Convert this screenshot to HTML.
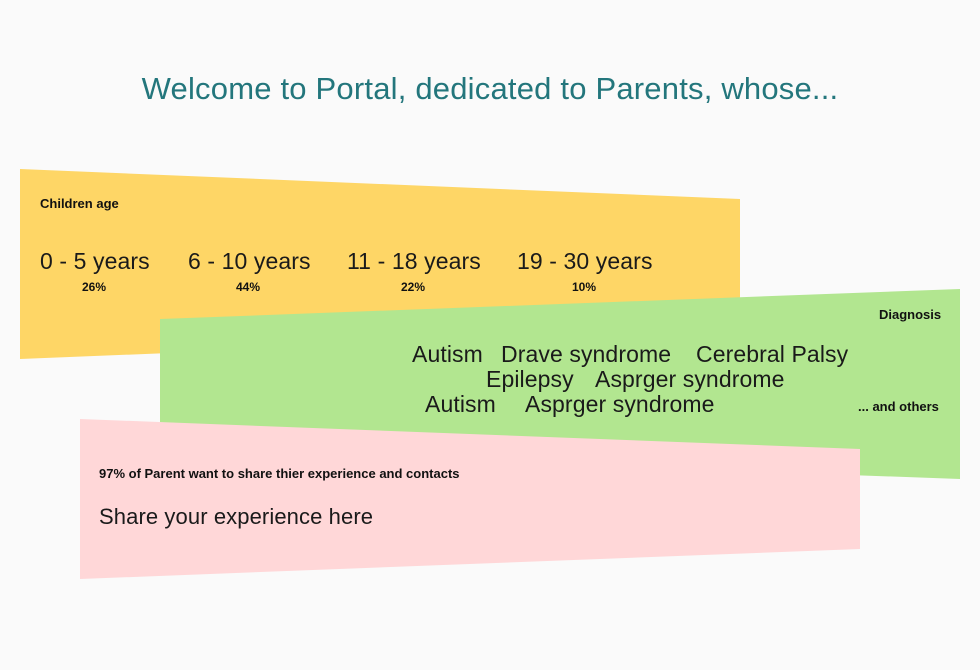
<!DOCTYPE html>
<html><head><meta charset="utf-8"><style>
body{margin:0;width:980px;height:670px;background:#fafafa;position:relative;overflow:hidden;font-family:"Liberation Sans",sans-serif;color:#111}
.a{position:absolute;white-space:nowrap}
h1{position:absolute;top:71px;left:0;width:980px;text-align:center;margin:0;font-weight:normal;font-size:31px;color:#23767c;letter-spacing:0.2px}
.b{font-weight:bold;font-size:13px}
.l{font-size:23px;font-weight:300;letter-spacing:0.1px;color:#1a1a1a}
</style></head><body>
<h1>Welcome to Portal, dedicated to Parents, whose...</h1>
<svg class="a" style="left:0;top:0" width="980" height="670">
<polygon points="20,169 740,199 740,330 20,359" fill="#fed666"/>
<polygon points="160,319 960,289 960,479 160,450" fill="#b2e690"/>
<polygon points="80,419 860,449 860,549 80,579" fill="#ffd7d8"/>
</svg>
<div class="a b" style="left:40px;top:196px">Children age</div>
<div class="a l" style="left:40px;top:248px">0 - 5 years</div>
<div class="a l" style="left:188px;top:248px">6 - 10 years</div>
<div class="a l" style="left:347px;top:248px">11 - 18 years</div>
<div class="a l" style="left:517px;top:248px">19 - 30 years</div>
<div class="a b" style="left:82px;top:280px;font-size:12px">26%</div>
<div class="a b" style="left:236px;top:280px;font-size:12px">44%</div>
<div class="a b" style="left:401px;top:280px;font-size:12px">22%</div>
<div class="a b" style="left:572px;top:280px;font-size:12px">10%</div>
<div class="a b" style="left:879px;top:307px">Diagnosis</div>
<div class="a l" style="left:412px;top:341px">Autism</div>
<div class="a l" style="left:501px;top:341px">Drave syndrome</div>
<div class="a l" style="left:696px;top:341px">Cerebral Palsy</div>
<div class="a l" style="left:486px;top:366px">Epilepsy</div>
<div class="a l" style="left:595px;top:366px">Asprger syndrome</div>
<div class="a l" style="left:425px;top:391px">Autism</div>
<div class="a l" style="left:525px;top:391px">Asprger syndrome</div>
<div class="a b" style="left:858px;top:399px">... and others</div>
<div class="a b" style="left:99px;top:466px">97% of Parent want to share thier experience and contacts</div>
<div class="a l" style="left:99px;top:504px;font-size:22px">Share your experience here</div>
</body></html>
